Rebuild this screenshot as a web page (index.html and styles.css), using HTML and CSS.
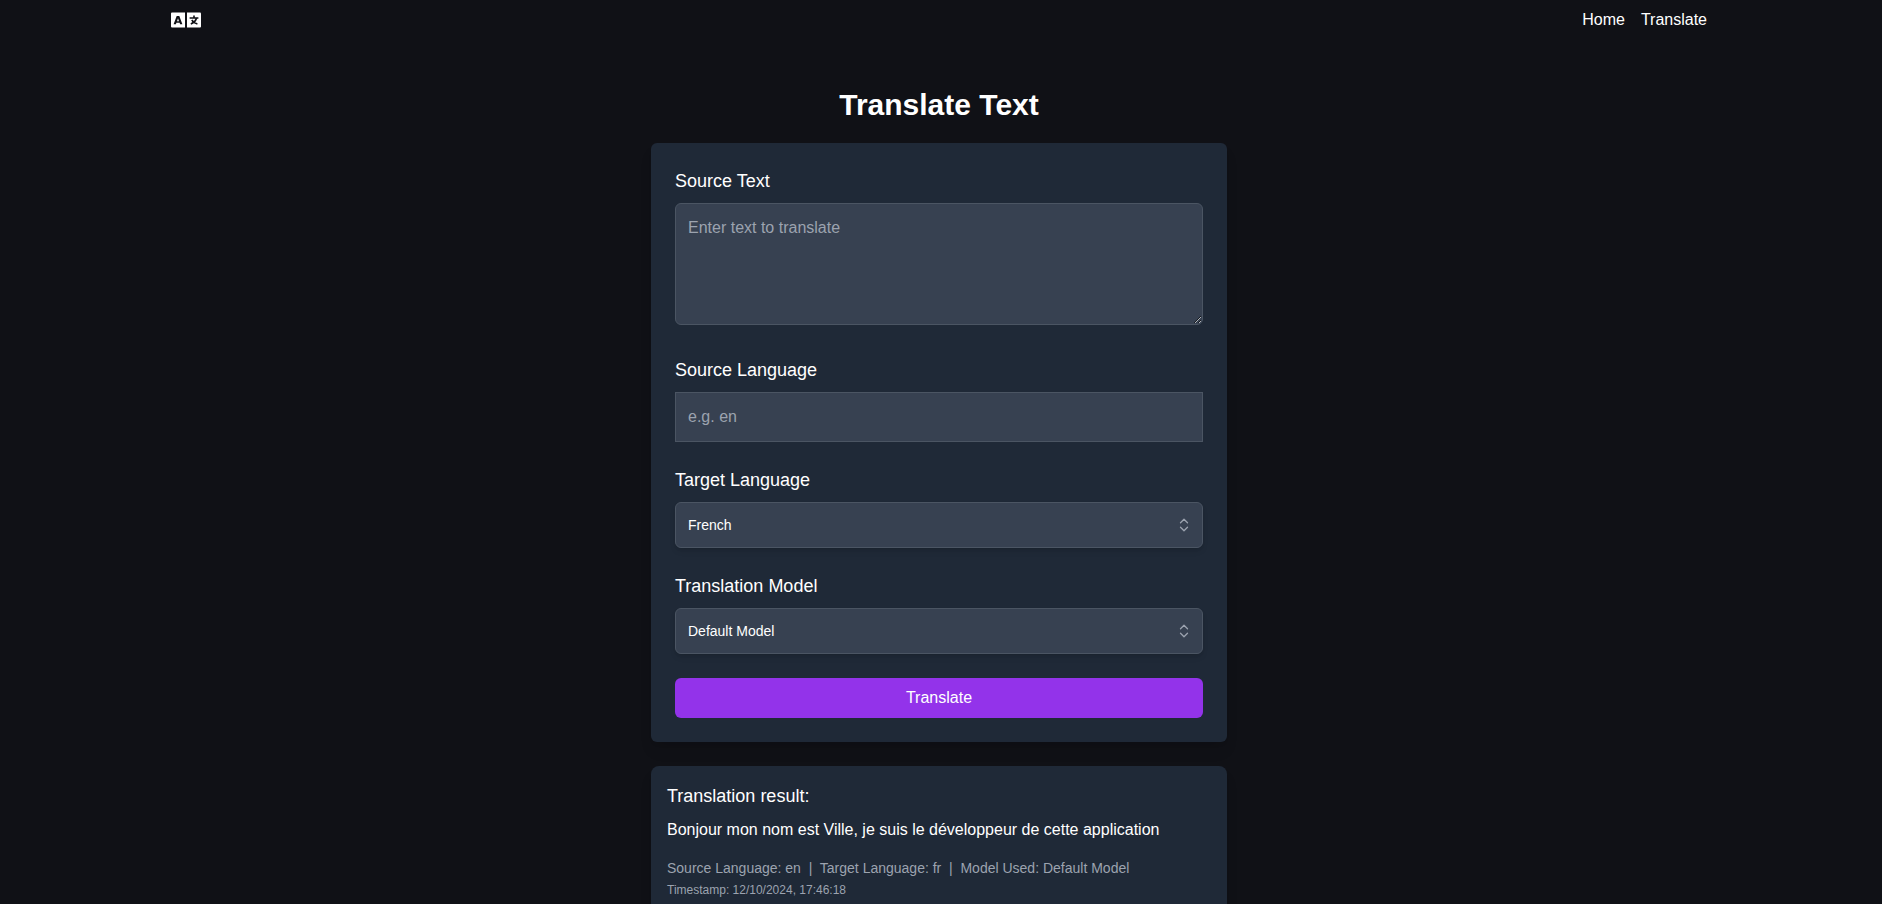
FILE: index.html
```html
<!DOCTYPE html>
<html lang="en">
<head>
<meta charset="utf-8">
<meta name="viewport" content="width=device-width, initial-scale=1">
<title>Translate Text</title>
<link rel="stylesheet" href="styles.css">
</head>
<body>
<header class="header">
  <div class="header-inner">
    <a class="logo" href="#" aria-label="Home page">
      <svg class="logo-icon" viewBox="0 0 30 16" fill="currentColor" aria-hidden="true">
        <path fill-rule="evenodd" d="M1 0.500H14V15.500H1Q0 15.500 0 14.500V1.500Q0 0.500 1 0.500ZM5.700 4L2.600 12.300H4.900L5.400 10.800H8.600L9.100 12.300H11.400L8.300 4ZM7 6.200L8 9.200H6Z"/>
        <path d="M16 0.500H29Q30 0.500 30 1.500V14.500Q30 15.500 29 15.500H16Z"/>
        <path class="logo-mark" d="M23 3.500V5.500M18.600 6H27.400M25.500 6.500Q24 10.500 19.800 12M20.800 8Q22.500 11 26.400 12"/>
      </svg>
    </a>
    <nav class="nav">
      <a href="#">Home</a>
      <a href="#">Translate</a>
    </nav>
  </div>
</header>
<main class="main">
  <h1 class="title">Translate Text</h1>
  <form class="card form">
    <div class="field">
      <label class="label" for="source-text">Source Text</label>
      <div class="text-holder"><textarea class="control area" id="source-text" placeholder="Enter text to translate"></textarea></div>
    </div>
    <div class="field">
      <label class="label" for="source-language">Source Language</label>
      <input class="control" id="source-language" type="text" placeholder="e.g. en">
    </div>
    <div class="field">
      <label class="label" for="target-language">Target Language</label>
      <div class="select-wrap">
        <select class="control select" id="target-language"><option>French</option></select>
        <svg class="chevrons" viewBox="0 0 16 16" fill="none" stroke="currentColor" stroke-width="1.300" stroke-linecap="round" stroke-linejoin="round" aria-hidden="true"><path d="M4.500 5.700L8 2.200L11.500 5.700M4.500 10.300L8 13.800L11.500 10.300"/></svg>
      </div>
    </div>
    <div class="field">
      <label class="label" for="translation-model">Translation Model</label>
      <div class="select-wrap">
        <select class="control select" id="translation-model"><option>Default Model</option></select>
        <svg class="chevrons" viewBox="0 0 16 16" fill="none" stroke="currentColor" stroke-width="1.300" stroke-linecap="round" stroke-linejoin="round" aria-hidden="true"><path d="M4.500 5.700L8 2.200L11.500 5.700M4.500 10.300L8 13.800L11.500 10.300"/></svg>
      </div>
    </div>
    <button class="submit" type="submit">Translate</button>
  </form>
  <section class="card result">
    <h2 class="result-title">Translation result:</h2>
    <p class="result-text">Bonjour mon nom est Ville, je suis le développeur de cette application</p>
    <p class="meta">Source Language: en &nbsp;|&nbsp; Target Language: fr &nbsp;|&nbsp; Model Used: Default Model</p>
    <p class="timestamp">Timestamp: 12/10/2024, 17:46:18</p>
  </section>
</main>
</body>
</html>
```
FILE: styles.css
```css
*, *::before, *::after {
  box-sizing: border-box;
}

html {
  background: #101116;
  padding-right: 4px;
  scrollbar-width: none;
}

body {
  margin: 0;
  color: #fff;
  font-family: Arial, "Liberation Sans", sans-serif;
  font-size: 16px;
  line-height: 24px;
}

h1, h2, p {
  margin: 0;
}

.header-inner {
  display: flex;
  align-items: center;
  justify-content: space-between;
  max-width: 1536px;
  margin: 0 auto;
  padding: 8px 0;
}

.logo {
  display: flex;
  color: #fff;
}

.logo-icon {
  width: 30px;
  height: 16px;
}

.logo-mark {
  fill: none;
  stroke: #101116;
  stroke-width: 1.6;
}

.nav {
  display: flex;
  gap: 16px;
}

.nav a {
  color: inherit;
  text-decoration: none;
}

.main {
  max-width: 576px;
  margin: 0 auto;
  padding: 47px 0 24px;
}

.title {
  margin-bottom: 20px;
  font-size: 30px;
  line-height: 36px;
  font-weight: 700;
  text-align: center;
}

.card {
  border-radius: 6px;
  background: #1f2937;
  box-shadow: 0 10px 15px -3px rgba(0, 0, 0, 0.1), 0 4px 6px -4px rgba(0, 0, 0, 0.1);
}

.form {
  display: flex;
  flex-direction: column;
  gap: 24px;
  padding: 24px;
}

.label {
  display: block;
  margin-bottom: 8px;
  font-size: 18px;
  line-height: 28px;
}

.control {
  display: block;
  width: 100%;
  height: 50px;
  padding: 12px;
  border: 1px solid #4b5563;
  border-radius: 0;
  background: #374151;
  color: #fff;
  font: inherit;
}

.control::placeholder {
  color: #9ca3af;
}

.text-holder {
  padding-bottom: 7px;
}

.area {
  height: 122px;
  border-radius: 6px;
}

.select-wrap {
  position: relative;
}

.select {
  height: 46px;
  border-radius: 6px;
  appearance: none;
  font-size: 14px;
  line-height: 20px;
  box-shadow: 0 4px 6px -1px rgba(0, 0, 0, 0.1), 0 2px 4px -2px rgba(0, 0, 0, 0.1);
}

.chevrons {
  position: absolute;
  top: 15px;
  right: 11px;
  width: 16px;
  height: 16px;
  color: #9ca3af;
  pointer-events: none;
}

.submit {
  padding: 8px 16px;
  border: 0;
  border-radius: 6px;
  background: #9333ea;
  color: #fff;
  font: inherit;
}

.result {
  margin-top: 24px;
  padding: 16px;
  border-radius: 8px;
}

.result-title {
  margin-bottom: 8px;
  font-size: 18px;
  line-height: 28px;
  font-weight: 400;
}

.result-text {
  margin-bottom: 16px;
}

.meta {
  color: #9ca3af;
  font-size: 14px;
  line-height: 20px;
}

.timestamp {
  margin-top: 4px;
  color: #9ca3af;
  font-size: 12px;
  line-height: 16px;
}
```
